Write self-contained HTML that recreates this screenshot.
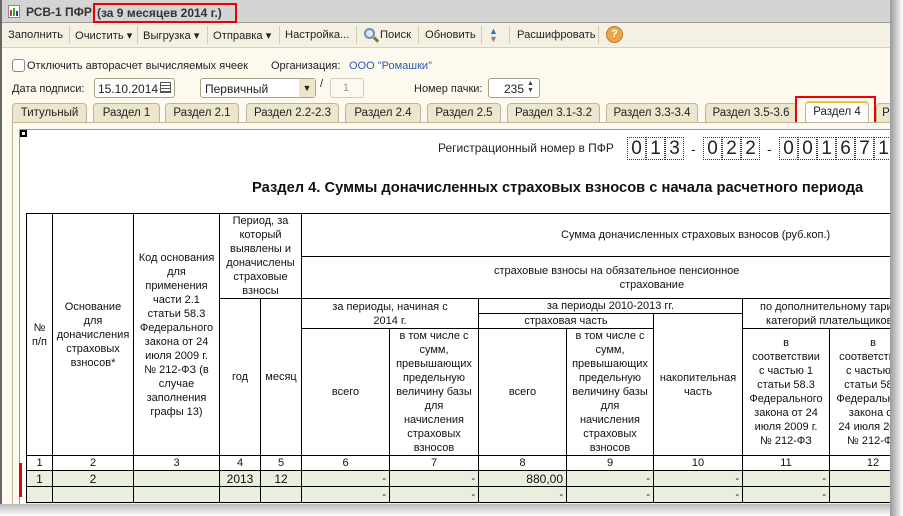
<!DOCTYPE html>
<html><head><meta charset="utf-8"><style>
*{margin:0;padding:0;box-sizing:border-box}
body{width:903px;height:516px;overflow:hidden;background:#fff;font-family:"Liberation Sans",Arial,sans-serif;font-size:11px;color:#222;position:relative}
.a{position:absolute}
.c{position:absolute;border-left:1px solid #000;border-top:1px solid #000;display:flex;align-items:center;justify-content:center;text-align:center;font-size:11px;line-height:14px;color:#111}
.tab{position:absolute;top:103px;height:19px;background:#ece6cc;border:1px solid #bdb597;border-bottom:none;border-radius:4px 4px 0 0;font-size:11.5px;text-align:center;line-height:18px}
.tb{position:absolute;top:29px;font-size:11.2px}
.sep{position:absolute;top:26px;width:1px;height:18px;background:#d2cbb0}
.dg{position:absolute;top:137px;width:19px;height:23px;border:1px dotted #333;font-size:19px;text-align:center;line-height:22px;color:#222}
.r{justify-content:flex-end;padding-right:3px}
</style></head><body>
<div class="a" style="left:0;top:0;width:893px;height:505px;background:#fdf9ee;border-left:2px solid #666"></div>
<div class="a" style="left:2px;top:0;width:891px;height:23px;background:#d4d4d4;border-bottom:1px solid #999"></div>
<div class="a" style="left:8px;top:5px;width:12px;height:13px;background:#fff;border:1px solid #888"></div>
<div class="a" style="left:10px;top:10px;width:2px;height:6px;background:#c33"></div><div class="a" style="left:13px;top:8px;width:2px;height:8px;background:#3a3"></div><div class="a" style="left:16px;top:11px;width:2px;height:5px;background:#33c"></div>
<div class="a" style="left:26px;top:5px;font-size:12px;font-weight:bold;color:#333">РСВ-1 ПФР</div>
<div class="a" style="left:97px;top:6px;font-size:12px;font-weight:bold;color:#333">(за 9 месяцев 2014 г.)</div>
<div class="a" style="left:93px;top:3px;width:144px;height:20px;border:2px solid #e00"></div>
<div class="a" style="left:2px;top:23px;width:891px;height:25px;background:#f4f1e3;border-bottom:1px solid #d8d2bb"></div>
<div class="tb" style="left:8px">Заполнить</div><div class="sep" style="left:69px"></div>
<div class="tb" style="left:75px">Очистить ▾</div><div class="sep" style="left:137px"></div>
<div class="tb" style="left:143px">Выгрузка ▾</div><div class="sep" style="left:207px"></div>
<div class="tb" style="left:213px">Отправка ▾</div><div class="sep" style="left:279px"></div>
<div class="tb" style="left:285px">Настройка...</div><div class="sep" style="left:356px"></div>
<div class="a" style="left:364px;top:28px;width:11px;height:11px;border:2px solid #6b8fb5;border-radius:50%;background:#dde9f5"></div>
<div class="a" style="left:373px;top:38px;width:6px;height:3px;background:#8a6a3a;transform:rotate(45deg)"></div>
<div class="tb" style="left:380px">Поиск</div><div class="sep" style="left:418px"></div>
<div class="tb" style="left:425px">Обновить</div><div class="sep" style="left:481px"></div>
<div class="a" style="left:489px;top:27px;color:#27c;font-size:9px;line-height:8px">▲<br><span style="color:#888">▼</span></div>
<div class="sep" style="left:509px"></div>
<div class="tb" style="left:517px">Расшифровать</div><div class="sep" style="left:598px"></div>
<div class="a" style="left:606px;top:26px;width:17px;height:17px;border-radius:50%;background:#eea54a;border:1px solid #c07a28;color:#fff;font-size:11px;font-weight:bold;text-align:center;line-height:15px">?</div>
<div class="a" style="left:12px;top:59px;width:13px;height:13px;border:1px solid #888;border-radius:3px;background:#fff"></div>
<div class="a" style="left:27px;top:60px">Отключить авторасчет вычисляемых ячеек</div>
<div class="a" style="left:271px;top:60px">Организация:</div>
<div class="a" style="left:349px;top:60px;color:#2a5db0">ООО "Ромашки"</div>
<div class="a" style="left:12px;top:83px">Дата подписи:</div>
<div class="a" style="left:94px;top:78px;width:81px;height:20px;border:1px solid #a9a28a;border-radius:3px;background:#fff;padding:3px 3px;font-size:12px">15.10.2014</div>
<div class="a" style="left:160px;top:82px;width:11px;height:11px;border:1px solid #555;background:repeating-linear-gradient(#fff 0 2px,#555 2px 3px)"></div>
<div class="a" style="left:200px;top:78px;width:116px;height:20px;border:1px solid #a9a28a;border-radius:3px;background:#fff;padding:3px 4px;font-size:12px">Первичный</div>
<div class="a" style="left:299px;top:79px;width:16px;height:18px;background:#ece6cc;text-align:center;font-size:9px;line-height:18px">▼</div>
<div class="a" style="left:320px;top:78px">/</div>
<div class="a" style="left:330px;top:78px;width:34px;height:20px;border:1px solid #d2cdbb;border-radius:3px;background:#fbf9f2;color:#999;text-align:right;padding:3px 14px 0 0">1</div>
<div class="a" style="left:414px;top:83px">Номер пачки:</div>
<div class="a" style="left:488px;top:78px;width:52px;height:20px;border:1px solid #a9a28a;border-radius:3px;background:#fff;text-align:right;padding:3px 15px 0 0;font-size:12px">235</div>
<div class="a" style="left:527px;top:80px;font-size:7px;line-height:7px;color:#444">▲<br>▼</div>
<div class="tab" style="left:12px;width:75px">Титульный</div>
<div class="tab" style="left:93px;width:67px">Раздел 1</div>
<div class="tab" style="left:165px;width:74px">Раздел 2.1</div>
<div class="tab" style="left:246px;width:93px">Раздел 2.2-2.3</div>
<div class="tab" style="left:345px;width:76px">Раздел 2.4</div>
<div class="tab" style="left:427px;width:74px">Раздел 2.5</div>
<div class="tab" style="left:507px;width:93px">Раздел 3.1-3.2</div>
<div class="tab" style="left:606px;width:92px">Раздел 3.3-3.4</div>
<div class="tab" style="left:705px;width:92px">Раздел 3.5-3.6</div>
<div class="tab" style="left:805px;width:64px;background:#fff;border-top:2px solid #f0c040;top:101px;height:21px">Раздел 4</div>
<div class="tab" style="left:876px;width:20px">Р</div>
<div class="a" style="left:795px;top:96px;width:81px;height:37px;border:2px solid #e00"></div>
<div class="a" style="left:12px;top:122px;width:881px;height:383px;border-left:1px solid #bdb597;border-top:1px solid #bdb597;background:#fdf9ee"></div>
<div class="a" style="left:19px;top:129px;width:874px;height:376px;border-left:1px solid #999;border-top:1px solid #999;background:#fff"></div>
<div class="a" style="left:20px;top:130px;width:7px;height:7px;border:2px solid #000"></div>
<div class="a" style="left:438px;top:141px;font-size:12px">Регистрационный номер в ПФР</div>
<div class="dg" style="left:627px">0</div><div class="dg" style="left:646px">1</div><div class="dg" style="left:665px">3</div>
<div class="a" style="left:691px;top:141px;font-size:14px">-</div>
<div class="dg" style="left:703px">0</div><div class="dg" style="left:722px">2</div><div class="dg" style="left:741px">2</div>
<div class="a" style="left:767px;top:141px;font-size:14px">-</div>
<div class="dg" style="left:779px">0</div><div class="dg" style="left:798px">0</div><div class="dg" style="left:817px">1</div><div class="dg" style="left:836px">6</div><div class="dg" style="left:855px">7</div><div class="dg" style="left:874px">1</div>
<div class="a" style="left:252px;top:180px;font-size:14.7px;font-weight:bold;color:#111;white-space:nowrap">Раздел 4. Суммы доначисленных страховых взносов с начала расчетного периода</div>
<div class="c" style="left:26px;top:213px;width:26px;height:242px">№<br>п/п</div>
<div class="c" style="left:52px;top:213px;width:81px;height:242px">Основание<br>для<br>доначисления<br>страховых<br>взносов*</div>
<div class="c" style="left:133px;top:213px;width:86px;height:242px">Код основания<br>для<br>применения<br>части 2.1<br>статьи 58.3<br>Федерального<br>закона от 24<br>июля 2009 г.<br>№ 212-ФЗ (в<br>случае<br>заполнения<br>графы 13)</div>
<div class="c" style="left:219px;top:213px;width:82px;height:85px">Период, за<br>который<br>выявлены и<br>доначислены<br>страховые<br>взносы</div>
<div class="c" style="left:219px;top:298px;width:41px;height:157px">год</div>
<div class="c" style="left:260px;top:298px;width:41px;height:157px">месяц</div>
<div class="c" style="left:301px;top:213px;width:600px;height:43px;justify-content:flex-start;padding-left:259px">Сумма доначисленных страховых взносов (руб.коп.)</div>
<div class="c" style="left:301px;top:256px;width:600px;height:42px;justify-content:flex-start;padding-left:192px">страховые взносы на обязательное пенсионное<br>&nbsp;&nbsp;&nbsp;&nbsp;&nbsp;&nbsp;&nbsp;&nbsp;&nbsp;&nbsp;&nbsp;&nbsp;&nbsp;&nbsp;&nbsp;&nbsp;&nbsp;&nbsp;&nbsp;&nbsp;&nbsp;&nbsp;&nbsp;страхование</div>
<div class="c" style="left:301px;top:298px;width:177px;height:30px">за периоды, начиная с<br>2014 г.</div>
<div class="c" style="left:478px;top:298px;width:264px;height:15px">за периоды 2010-2013 гг.</div>
<div class="c" style="left:478px;top:313px;width:175px;height:15px">страховая часть</div>
<div class="c" style="left:653px;top:313px;width:89px;height:142px">накопительная<br>часть</div>
<div class="c" style="left:742px;top:298px;width:160px;height:30px;justify-content:flex-start;padding-left:17px;white-space:nowrap">по дополнительному тарифу<br>категорий плательщиков с</div>
<div class="c" style="left:301px;top:328px;width:88px;height:127px">всего</div>
<div class="c" style="left:389px;top:328px;width:89px;height:127px">в том числе с<br>сумм,<br>превышающих<br>предельную<br>величину базы<br>для<br>начисления<br>страховых<br>взносов</div>
<div class="c" style="left:478px;top:328px;width:88px;height:127px">всего</div>
<div class="c" style="left:566px;top:328px;width:87px;height:127px">в том числе с<br>сумм,<br>превышающих<br>предельную<br>величину базы<br>для<br>начисления<br>страховых<br>взносов</div>
<div class="c" style="left:742px;top:328px;width:87px;height:127px">в<br>соответствии<br>с частью 1<br>статьи 58.3<br>Федерального<br>закона от 24<br>июля 2009 г.<br>№ 212-ФЗ</div>
<div class="c" style="left:829px;top:328px;width:87px;height:127px;white-space:nowrap">в<br>соответствии<br>с частью 1<br>статьи 58.3<br>Федерального<br>закона от<br>24 июля 2009<br>№ 212-ФЗ</div>
<div class="c" style="left:26px;top:455px;width:26px;height:15px">1</div>
<div class="c" style="left:52px;top:455px;width:81px;height:15px">2</div>
<div class="c" style="left:133px;top:455px;width:86px;height:15px">3</div>
<div class="c" style="left:219px;top:455px;width:41px;height:15px">4</div>
<div class="c" style="left:260px;top:455px;width:41px;height:15px">5</div>
<div class="c" style="left:301px;top:455px;width:88px;height:15px">6</div>
<div class="c" style="left:389px;top:455px;width:89px;height:15px">7</div>
<div class="c" style="left:478px;top:455px;width:88px;height:15px">8</div>
<div class="c" style="left:566px;top:455px;width:87px;height:15px">9</div>
<div class="c" style="left:653px;top:455px;width:89px;height:15px">10</div>
<div class="c" style="left:742px;top:455px;width:87px;height:15px">11</div>
<div class="c" style="left:829px;top:455px;width:87px;height:15px">12</div>
<div class="a" style="left:26px;top:470px;width:870px;height:35px;background:#e8efdc"></div>
<div class="c" style="left:26px;top:470px;width:26px;height:16px;font-size:12px">1</div>
<div class="c" style="left:52px;top:470px;width:81px;height:16px;font-size:12px">2</div>
<div class="c" style="left:133px;top:470px;width:86px;height:16px"></div>
<div class="c" style="left:219px;top:470px;width:41px;height:16px;font-size:12px">2013</div>
<div class="c" style="left:260px;top:470px;width:41px;height:16px;font-size:12px">12</div>
<div class="c r" style="left:301px;top:470px;width:88px;height:16px">-</div>
<div class="c r" style="left:389px;top:470px;width:89px;height:16px">-</div>
<div class="c r" style="left:478px;top:470px;width:88px;height:16px;font-size:12px">880,00</div>
<div class="c r" style="left:566px;top:470px;width:87px;height:16px">-</div>
<div class="c r" style="left:653px;top:470px;width:89px;height:16px">-</div>
<div class="c r" style="left:742px;top:470px;width:87px;height:16px">-</div>
<div class="c r" style="left:829px;top:470px;width:87px;height:16px"></div>
<div class="c" style="left:26px;top:486px;width:26px;height:16px"></div>
<div class="c" style="left:52px;top:486px;width:81px;height:16px"></div>
<div class="c" style="left:133px;top:486px;width:86px;height:16px"></div>
<div class="c" style="left:219px;top:486px;width:41px;height:16px"></div>
<div class="c" style="left:260px;top:486px;width:41px;height:16px"></div>
<div class="c r" style="left:301px;top:486px;width:88px;height:16px">-</div>
<div class="c r" style="left:389px;top:486px;width:89px;height:16px">-</div>
<div class="c r" style="left:478px;top:486px;width:88px;height:16px">-</div>
<div class="c r" style="left:566px;top:486px;width:87px;height:16px">-</div>
<div class="c r" style="left:653px;top:486px;width:89px;height:16px">-</div>
<div class="c r" style="left:742px;top:486px;width:87px;height:16px">-</div>
<div class="c" style="left:829px;top:486px;width:87px;height:16px"></div>
<div class="a" style="left:26px;top:502px;width:870px;height:1px;background:#000"></div>
<div class="a" style="left:19px;top:463px;width:3px;height:34px;background:#e00"></div>
<div class="a" style="left:0;top:504px;width:903px;height:12px;background:linear-gradient(#bbb,#fff)"></div>
<div class="a" style="left:890px;top:0;width:13px;height:516px;background:linear-gradient(90deg,#999,#fff)"></div>
</body></html>
